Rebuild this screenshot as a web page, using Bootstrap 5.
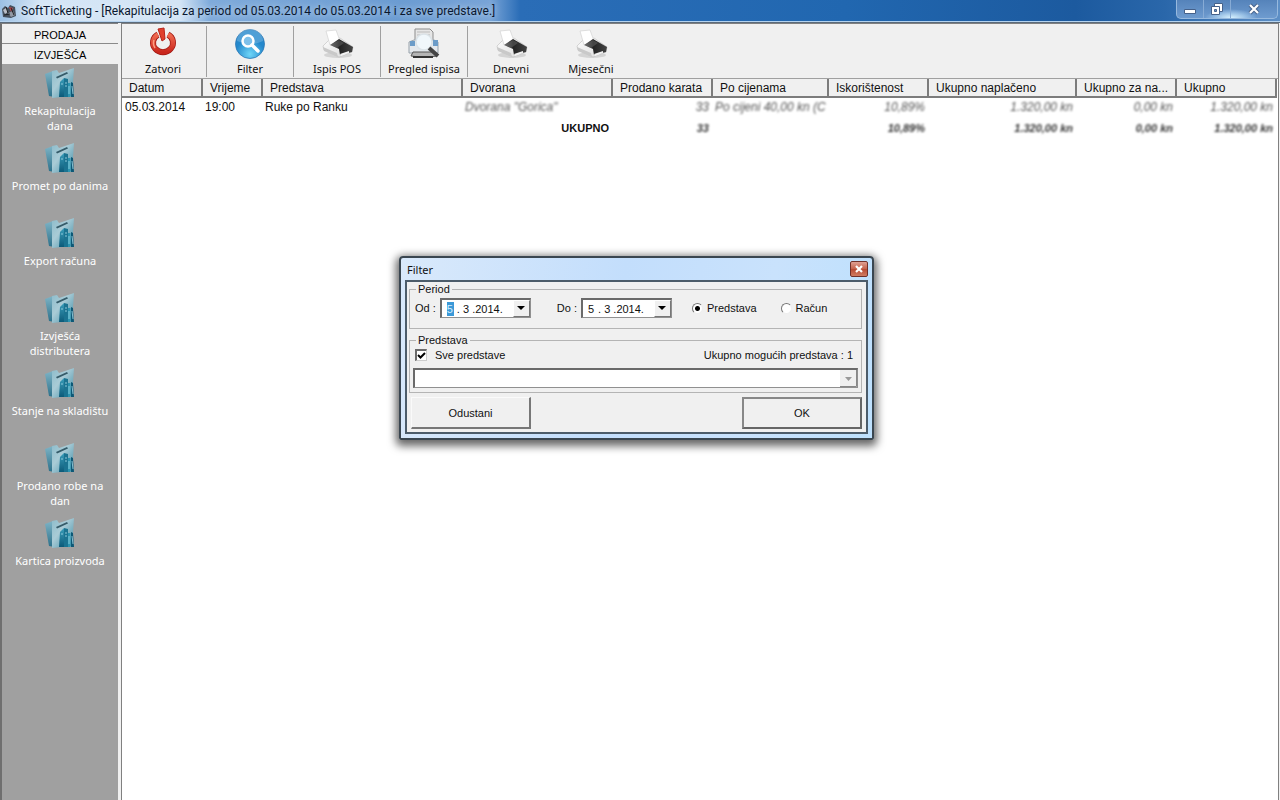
<!DOCTYPE html>
<html lang="hr">
<head>
<meta charset="utf-8">
<meta name="viewport" content="width=device-width, initial-scale=1">
<title>SoftTicketing</title>
<link href="https://cdn.jsdelivr.net/npm/bootstrap@5.3.0/dist/css/bootstrap.min.css" rel="stylesheet">
<style>
  :root { --ui: "Noto Sans", "Open Sans", sans-serif; --classic: "Liberation Sans", Arial, sans-serif; }
  body { font-family: var(--ui); font-size: 11px; line-height: 15px; color: #111; background: #f0f0f0; overflow: hidden; }
  button, input, select { font: inherit; color: inherit; }

  /* window caption */
  .caption { height: 22px; padding-left: 1px; border-bottom: 1px solid #b5d3ef;
    background: linear-gradient(90deg, #9cc0e4 0, #d5e6f6 40px, #d3e4f5 180px, #7fabdb 210px, #6b9cd2 400px, #78a4d7 490px, #2a6db7 520px, #2167b0 66%, #1c5a9f 84%, #2a67aa 91%, #5d8fc6 100%); }
  .caption-icon { width: 16px; height: 16px; }
  .caption-title { font: 12px/15px Roboto, sans-serif; color: #0a1830; text-shadow: 0 0 6px rgba(255,255,255,.7); padding-top: 1px; }
  .win-controls { height: 19px; border: 1px solid #97b9de; border-top: 0; border-radius: 0 0 5px 5px; margin-right: 2px;
    background: radial-gradient(ellipse 26px 9px at 54px 18px, #d9f3ff, rgba(190,225,250,.5) 60%, transparent), linear-gradient(#5583ba, #6e9bcf); }
  .win-controls button { width: 27px; border: 0; border-right: 1px solid #87abd5; background: none; }
  .win-controls button:last-child { width: 46px; border: 0; }
  .under-caption { border-top: 1px solid #5b6b7b; }

  /* side panel */
  .side { width: 118px; background: #a0a0a0; border-left: 2px solid #6f6f6f; border-top: 1px solid #808080; }
  .side-tab { height: 20px; border: 0; border-bottom: 1px solid #8a8a8a; background: #f0f0f0; color: #000; font: 11px/18px var(--classic); padding: 2px 0 0; }
  .side-tab + .side-tab { border-bottom-color: #f0f0f0; }
  .side-item { height: 75px; color: #fff; text-decoration: none; padding: 2px 4px 0; }
  .side-item:hover { color: #fff; }
  .side-item svg { width: 32px; height: 34px; margin-bottom: 3px; }
  .workspace { margin: 0 1px 0 3px; border: 1px solid #808080; border-width: 1px 1px 0 1px; padding-right: 1px; background: #fff; min-width: 0; }

  /* toolbar */
  .tools { height: 55px; background: #f0f0f0; border-bottom: 1px solid #a0a0a0; padding: 2px 0 1px; margin-right: -1px; }
  .tool { width: 87px; border: 0; background: none; padding: 0 0 2px; border-right: 1px solid #a0a0a0; white-space: nowrap; }
  .tool:first-child { width: 85px; padding-right: 2px; }
  .tool.plain { width: 86px; border: 0; }
  .tool.plain:last-child { width: 74px; }
  .tool svg { width: 34px; height: 34px; margin-bottom: 1px; }

  /* report grid */
  .report { table-layout: fixed; font: 12px/14px var(--classic); color: #111; }
  .report th { height: 18px; font-weight: 400; padding: 1px 0 0 7px; background: #f0f0f0; border: solid #7c7c7c; border-width: 0 2px 2px 0; white-space: nowrap; overflow: hidden; text-overflow: ellipsis; }
  .report td { height: 21px; padding: 1px 3px 3px; white-space: nowrap; overflow: hidden; }
  .report .num { text-align: right; }
  .hidden-value { font-style: italic; color: #555; filter: blur(1px); display: inline-block; }
  .report .sum { font-size: 11px; font-weight: 700; }
  .sum .hidden-value { color: #333; }

  /* filter dialog */
  .filter-box { left: 399px; top: 256px; width: 475px; border: 2px solid #3a4650; border-radius: 4px 4px 2px 2px; padding: 0 4px 4px;
    background: linear-gradient(100deg, #d9e9fb, #c3defc 45%, #c9e2fc 75%, #bde0fd);
    box-shadow: 0 3px 9px 3px rgba(0,0,0,.6); }
  .filter-head { height: 22px; padding-left: 2px; }
  .filter-close { width: 18px; height: 16px; border: 1px solid #70302a; border-radius: 2px; padding: 0; background: linear-gradient(#dfa094, #c4604a 50%, #b84a33 51%, #d07c62); }
  .filter-body { border: 2px solid #4c5c6a; background: #f0f0f0; font: 11px/14px var(--classic); padding: 0 4px 3px 2px; color: #111; }
  .group { border: 1px solid #b4b4b4; padding: 0 3px; }
  .group legend { font-size: 11px; line-height: 14px; width: auto; float: none; padding: 0 2px; margin: 0 0 0 3px; }
  .group-row { padding: 1px 5px 0 2px; }
  .period-row { padding-bottom: 10px; padding-top: 2px; }
  .sunken { border: 2px solid #6a6a6a; border-right-color: #909090; border-bottom-color: #909090; border-width: 2px 1px 1px 2px; background: #fff; height: 20px; }
  .date-box { width: 91px; padding-left: 5px; }
  .date-box input { border: 0; padding: 0; background: none; outline: 0; height: 14px; min-width: 0; }
  .date-box .day { width: 7px; }
  .date-box .day.picked { background: #3b99d8; color: #d5efff; }
  .date-gap { margin-right: 26px; }
  .drop { width: 17px; height: 17px; border: 1px solid #777; border-top-color: #fff; border-left-color: #fff; background: #f0f0f0; padding: 0; }
  .filter-body input[type=radio], .filter-body input[type=checkbox] { appearance: none; margin: 0; flex: none; background: #fff; border: 1px solid #888; }
  .filter-body input[type=radio] { width: 11px; height: 11px; border-radius: 50%; border-color: #777 #eee #eee #777; }
  .filter-body input[type=radio]:checked { background: radial-gradient(circle, #000 2px, #fff 3px); }
  .filter-body input[type=checkbox] { width: 12px; height: 12px; border-width: 2px 1px 1px 2px; border-color: #6a6a6a #ccc #ccc #6a6a6a;
    background: #fff url("data:image/svg+xml,%3Csvg xmlns='http://www.w3.org/2000/svg' viewBox='0 0 9 9'%3E%3Cpath d='M1 4l2.500 2.500L8 2' fill='none' stroke='%23000' stroke-width='2'/%3E%3C/svg%3E") center/9px; }
  .show-select { width: 100%; appearance: none; padding: 0 20px 0 4px; margin-top: 6px; opacity: 1;
    background: #fff url("data:image/svg+xml,%3Csvg xmlns='http://www.w3.org/2000/svg' viewBox='0 0 17 17'%3E%3Cpath d='M0 0h17v17H0z' fill='%23f0f0f0'/%3E%3Cpath d='M16.500 0V16.500H0' fill='none' stroke='%23888'/%3E%3Cpath d='M5 7h7l-3.500 4z' fill='%23999'/%3E%3C/svg%3E") right/17px no-repeat; }
  .push { height: 32px; width: 120px; background: #f0f0f0; border: solid #777; border-color: #fafafa #777 #777 #fafafa; border-width: 1px 2px 2px 1px; }
  .push.main { border-color: #888 #666 #666 #888; border-width: 2px; }
  .actions { padding: 4px 0 0 2px; }
</style>
</head>
<body class="vh-100 d-flex flex-column">
<svg width="0" height="0" class="position-absolute" aria-hidden="true">
  <defs>
    <linearGradient id="gFolder" x1="0" x2="1" y2="1"><stop stop-color="#8dbccb"/><stop offset=".4" stop-color="#a9cbd6"/><stop offset="1" stop-color="#3b8ba4"/></linearGradient>
    <linearGradient id="gEdge" x2="0" y2="1"><stop stop-color="#7fb4c6"/><stop offset="1" stop-color="#2b708a"/></linearGradient>
    <linearGradient id="gBook" x2="0" y2="1"><stop stop-color="#3a9dba"/><stop offset="1" stop-color="#0c5a79"/></linearGradient>
    <linearGradient id="gRed" x2="0" y2="1"><stop stop-color="#f06a50"/><stop offset="1" stop-color="#c9261c"/></linearGradient>
    <radialGradient id="gBlue" cy=".85"><stop stop-color="#6fd6f8"/><stop offset="1" stop-color="#2488cc"/></radialGradient>
    <linearGradient id="gDark"><stop stop-color="#777"/><stop offset=".4" stop-color="#222"/><stop offset="1" stop-color="#444"/></linearGradient>
    <linearGradient id="gPaper" x2="1" y2="1"><stop stop-color="#fff"/><stop offset="1" stop-color="#d8d8d8"/></linearGradient>
  </defs>
  <symbol id="i-report" viewBox="0 0 32 34">
    <path d="M1 8l8-3 2 26-6-1z" fill="url(#gEdge)"/>
    <path d="M8 5l5-1 2 3 15-5-2 28-20 2z" fill="url(#gFolder)"/>
    <path d="M12 11l11-5 1 1.500-11 5z" fill="#355b69"/>
    <path d="M16 16l4-4 1 19h-6z" fill="url(#gBook)"/><path d="M20 12l4 1v18h-4z" fill="#1b7391"/>
    <path d="M24 17h2.500v14H24z" fill="#2c94b0"/><path d="M27 16l2 1 1 14h-3z" fill="#0d5876"/>
    <path d="M21 17h2M21 20h2M17 18h2M25 20v8M28 20l1 8" stroke="#a5dcea" stroke-width=".8"/>
  </symbol>
  <symbol id="i-printer" viewBox="0 0 34 34">
    <ellipse cx="18" cy="29" rx="14" ry="3" fill="#d4d4d4"/>
    <path d="M3 20l7-7 10-1 13 9-1 5-13 5-15-7z" fill="url(#gPaper)" stroke="#c4c4c4" stroke-width=".7"/>
    <path d="M3 21l14 6 1 4-14-6z" fill="#c9c9c9"/>
    <path d="M6 5l10-1 4 11-10 4z" fill="#fff" stroke="#d2d2d2" stroke-width=".7"/>
    <path d="M10 19l9-6 14 8-1 5-12 3-1-6z" fill="url(#gDark)"/>
    <path d="M11 19l8-5 5 3-7 5z" fill="#666" opacity=".5"/>
    <path d="M20 28l9-3v2l-8 3z" fill="#f2f2f2"/>
  </symbol>
</svg>

<header class="caption d-flex align-items-center flex-shrink-0">
  <svg class="caption-icon me-1" viewBox="0 0 16 16" aria-hidden="true"><path d="M1 6l3-3 3 2 2-3 5 2 1 9-5 2-8-1z" fill="#46505d"/><path d="M2 7l3-2 2 4-3 2z" fill="#b8bcc5"/><path d="M8 4l4 1-2 4z" fill="#c44448"/><path d="M7 10l5-2 2 4-4 2z" fill="#9298a3"/><path d="M5 4l2 6m3-5l3 7M3 12l6-1" stroke="#222" /></svg>
  <span class="caption-title text-nowrap">SoftTicketing - [Rekapitulacija za period od 05.03.2014 do 05.03.2014 i za sve predstave.]</span>
  <div class="win-controls d-flex ms-auto align-self-start">
    <button class="p-0 d-flex align-items-center justify-content-center" aria-label="Smanji"><svg width="14" height="14" viewBox="0 0 14 14"><path d="M1.500 7.500h11v4h-11z" fill="#fff" stroke="#45618a"/></svg></button>
    <button class="p-0 d-flex align-items-center justify-content-center" aria-label="Vrati"><svg width="14" height="14" viewBox="0 0 14 14"><path d="M4.500 1.500h8v8h-8z" fill="#fff" stroke="#45618a"/><path d="M1.500 4.500h8v8h-8z" fill="#fff" stroke="#45618a"/><path d="M4.500 7.500h2v2h-2z" fill="#6f97c5" stroke="#45618a"/></svg></button>
    <button class="p-0 d-flex align-items-center justify-content-center" aria-label="Zatvori prozor"><svg width="14" height="14" viewBox="0 0 14 14"><path d="M3 3l8 8M11 3l-8 8" stroke="#45618a" stroke-width="4"/><path d="M3 3l8 8M11 3l-8 8" stroke="#fff" stroke-width="2.200"/></svg></button>
  </div>
</header>

<div class="under-caption d-flex flex-grow-1">
  <nav class="side d-flex flex-column flex-shrink-0 text-center">
    <button class="side-tab">PRODAJA</button>
    <button class="side-tab">IZVJEŠĆA</button>
    <a href="#" class="side-item"><svg class="d-block mx-auto"><use href="#i-report"/></svg>Rekapitulacija<br>dana</a>
    <a href="#" class="side-item"><svg class="d-block mx-auto"><use href="#i-report"/></svg>Promet po danima</a>
    <a href="#" class="side-item"><svg class="d-block mx-auto"><use href="#i-report"/></svg>Export računa</a>
    <a href="#" class="side-item"><svg class="d-block mx-auto"><use href="#i-report"/></svg>Izvješća<br>distributera</a>
    <a href="#" class="side-item"><svg class="d-block mx-auto"><use href="#i-report"/></svg>Stanje na skladištu</a>
    <a href="#" class="side-item"><svg class="d-block mx-auto"><use href="#i-report"/></svg>Prodano robe na<br>dan</a>
    <a href="#" class="side-item"><svg class="d-block mx-auto"><use href="#i-report"/></svg>Kartica proizvoda</a>
  </nav>

  <main class="workspace flex-grow-1">
    <div class="tools d-flex">
      <button class="tool"><svg class="d-block mx-auto" viewBox="0 0 34 34"><path d="M12 8.500a10 9.500 0 1 0 10 0" fill="none" stroke="#a01812" stroke-width="6"/><path d="M12 8.500a10 9.500 0 1 0 10 0" fill="none" stroke="url(#gRed)" stroke-width="4.500"/><path d="M8 14a9 9 0 0 0 1 8" fill="none" stroke="#ff9d80" stroke-width="1.500"/><path d="M12 3l6-1 1 11-3 2z" fill="#e0402d" stroke="#b8241a"/></svg>Zatvori</button>
      <button class="tool"><svg class="d-block mx-auto" viewBox="0 0 34 34"><circle cx="17" cy="18" r="14.500" fill="url(#gBlue)" stroke="#2f79b5" stroke-width=".8"/><path d="M4 15a13 12 0 0 1 26 0q-12 6-26 0z" fill="#fff" opacity=".2"/><circle cx="15" cy="15" r="5.500" fill="#7ec0ea" stroke="#fff" stroke-width="2.500"/><path d="M19 19l6 6" stroke="#fff" stroke-width="3.500" stroke-linecap="round"/></svg>Filter</button>
      <button class="tool"><svg class="d-block mx-auto"><use href="#i-printer"/></svg>Ispis POS</button>
      <button class="tool"><svg class="d-block mx-auto" viewBox="0 0 34 34"><path d="M8 3h15l3 3v14H8z" fill="#e6e6e6" stroke="#8d8d8d"/><path d="M10 6h13M10 9h13" stroke="#bbb"/><path d="M2 16l5-2h20l4 2v11H2z" fill="#e4e8ec" stroke="#97a1aa"/><path d="M3 15h5v5H3zM26 14h5v6h-5z" fill="#6c9cc8"/><path d="M6 26h22l2 4q-13 3-26 0z" fill="#b5b5b5" stroke="#555"/><path d="M6 31h20" stroke="#333" stroke-width="2"/><circle cx="17" cy="16" r="8" fill="#f0f7fb" stroke="#dbe3e8" stroke-width="1.500"/><path d="M22 22l9 8" stroke="#444" stroke-width="4"/></svg>Pregled ispisa</button>
      <button class="tool plain"><svg class="d-block mx-auto"><use href="#i-printer"/></svg>Dnevni</button>
      <button class="tool plain"><svg class="d-block mx-auto"><use href="#i-printer"/></svg>Mjesečni</button>
    </div>

    <table class="report w-100">
      <colgroup><col style="width:80px"><col style="width:60px"><col style="width:200px"><col style="width:150px"><col style="width:100px"><col style="width:116px"><col style="width:100px"><col style="width:148px"><col style="width:100px"><col></colgroup>
      <thead><tr><th>Datum</th><th>Vrijeme</th><th>Predstava</th><th>Dvorana</th><th>Prodano karata</th><th>Po cijenama</th><th>Iskorištenost</th><th>Ukupno naplačeno</th><th>Ukupno za na...</th><th>Ukupno</th></tr></thead>
      <tbody>
        <tr><td>05.03.2014</td><td>19:00</td><td>Ruke po Ranku</td><td><span class="hidden-value">Dvorana "Gorica"</span></td><td class="num"><span class="hidden-value">33</span></td><td><span class="hidden-value">Po cijeni 40,00 kn (C</span></td><td class="num"><span class="hidden-value">10,89%</span></td><td class="num"><span class="hidden-value">1.320,00 kn</span></td><td class="num"><span class="hidden-value">0,00 kn</span></td><td class="num"><span class="hidden-value">1.320,00 kn</span></td></tr>
        <tr class="sum"><td></td><td></td><td></td><td class="num">UKUPNO</td><td class="num"><span class="hidden-value">33</span></td><td></td><td class="num"><span class="hidden-value">10,89%</span></td><td class="num"><span class="hidden-value">1.320,00 kn</span></td><td class="num"><span class="hidden-value">0,00 kn</span></td><td class="num"><span class="hidden-value">1.320,00 kn</span></td></tr>
      </tbody>
    </table>
  </main>
</div>

<section class="filter-box position-absolute" role="dialog" aria-labelledby="filterTitle">
  <div class="filter-head d-flex align-items-center justify-content-between">
    <span id="filterTitle">Filter</span>
    <button class="filter-close d-flex align-items-center justify-content-center" aria-label="Zatvori"><svg width="8" height="8" viewBox="0 0 8 8"><path d="M1 1l6 6M7 1L1 7" stroke="#fff" stroke-width="2.200"/></svg></button>
  </div>
  <form class="filter-body">
    <fieldset class="group">
      <legend>Period</legend>
      <div class="group-row period-row d-flex align-items-center">
        <label for="odDan" class="me-1">Od :</label>
        <div class="sunken date-box date-gap d-flex align-items-center">
          <input id="odDan" class="day picked" value="5"><input class="flex-grow-1 w-50" aria-label="Od mjesec i godina" value=" . 3 .2014.">
          <button type="button" class="drop d-flex align-items-center justify-content-center" aria-label="Kalendar od"><svg width="8" height="5"><path d="M0 0h8L4 4z"/></svg></button>
        </div>
        <label for="doDan" class="me-1">Do :</label>
        <div class="sunken date-box d-flex align-items-center">
          <input id="doDan" class="day" value="5"><input class="flex-grow-1 w-50" aria-label="Do mjesec i godina" value=" . 3 .2014.">
          <button type="button" class="drop d-flex align-items-center justify-content-center" aria-label="Kalendar do"><svg width="8" height="5"><path d="M0 0h8L4 4z"/></svg></button>
        </div>
        <div class="d-flex align-items-center gap-4 ms-3 ps-1">
          <label class="d-flex align-items-center gap-1"><input type="radio" name="vrsta" checked>Predstava</label>
          <label class="d-flex align-items-center gap-1"><input type="radio" name="vrsta">Račun</label>
        </div>
      </div>
    </fieldset>
    <fieldset class="group pb-1 mt-1">
      <legend>Predstava</legend>
      <div class="group-row d-flex justify-content-between">
        <label class="d-flex align-items-center gap-1"><input type="checkbox" class="me-1" checked>Sve predstave</label>
        <span>Ukupno mogućih predstava : 1</span>
      </div>
      <select class="sunken show-select d-block" aria-label="Predstava" disabled><option></option></select>
    </fieldset>
    <div class="actions d-flex justify-content-between">
      <button type="button" class="push">Odustani</button>
      <button type="button" class="push main">OK</button>
    </div>
  </form>
</section>
<script src="https://cdn.jsdelivr.net/npm/bootstrap@5.3.0/dist/js/bootstrap.bundle.min.js"></script>
</body>
</html>
